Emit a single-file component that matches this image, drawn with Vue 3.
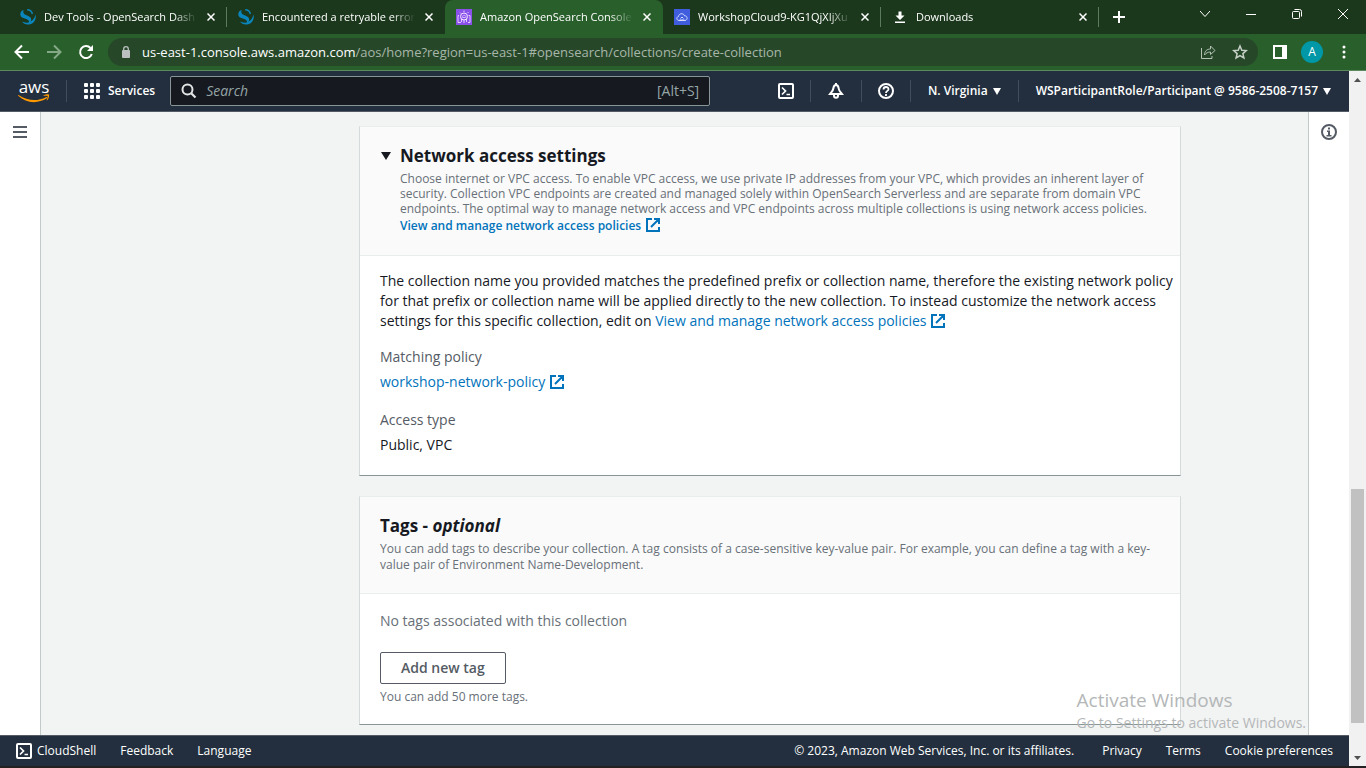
<script setup>
import { ref } from 'vue'

const tabs = [
  { title: 'Dev Tools - OpenSearch Dash', icon: 'opensearch' },
  { title: 'Encountered a retryable error', icon: 'opensearch', joined: true },
  { title: 'Amazon OpenSearch Console', icon: 'service', active: true },
  { title: 'WorkshopCloud9-KG1QjXIjXu', icon: 'cloud9' },
  { title: 'Downloads', icon: 'download' }
]
const query = ref('')
const open = ref(true)
const externalPath = 'M6 1H1v12h12V9M8 1h5v5M13 1L5 9'
</script>

<template>
  <div class="window">
    <header class="tabstrip">
      <div v-for="tab in tabs" :key="tab.title" class="tab" :class="{ active: tab.active, joined: tab.joined }">
        <svg v-if="tab.icon === 'opensearch'" class="favicon" viewBox="0 0 16 16" aria-hidden="true">
          <path d="M.300 5.500C.300 3 1.600 1.500 3.600 1 2.700 4 4 5.200 6.600 6.200c3.200 1.200 4.900 2.500 4.600 5-.2 1.300-1 2.100-2.200 2.500.4-2-.8-3.200-3.500-4C2.200 8.800.3 7.900.3 5.500z" fill="#0b86bd" />
          <path d="M15.600 5.500c1 4.800-1.900 9.500-6.800 10-3 .3-5.400-.9-6.800-3 2.300 1.300 5.400 1.700 8.200.3 3.200-1.700 4.400-4.200 5.400-7.300z" fill="#0b86bd" />
          <path d="M7.200.8c2.700.1 4.600 1.600 5.200 4.200" fill="none" stroke="#0b86bd" stroke-width="1.500" />
        </svg>
        <svg v-else-if="tab.icon === 'service'" class="favicon" viewBox="0 0 16 16" aria-hidden="true">
          <rect width="16" height="16" fill="#8950ea" />
          <path d="M3 6.500H2v7h3M5.500 13V9.500M8 14v-3M10.500 13V9.500M12.500 6.500h1.500v7h-2M5 4.500L4 3.500M11.500 4l1-1M8 3V1.500" fill="none" stroke="#e2cdff" />
          <circle cx="8" cy="7.500" r="3.500" fill="none" stroke="#f1e6ff" />
          <path d="M6.500 8.500c-.6-1 .2-1.700.8-1.700.4-1 1.800-.8 2 .1 1 .1 1 1.600 0 1.600z" fill="none" stroke="#e2cdff" stroke-width=".8" />
        </svg>
        <svg v-else-if="tab.icon === 'cloud9'" class="favicon" viewBox="0 0 16 16" aria-hidden="true">
          <rect width="16" height="16" fill="#3f5ddd" />
          <path d="M5 11.500c-2.500 0-3-3.500-.5-4 .3-3.300 5-3.800 6-.7 3.200-.2 3.500 4.500.5 4.700zM6.500 9.500L8 8l1.500 1.500M5.500 11h5" fill="none" stroke="#d5ddff" />
        </svg>
        <svg v-else class="favicon" viewBox="0 0 16 16" aria-hidden="true">
          <path d="M6.500 2.500h3v4h3L8 11 3.500 6.500h3zM3 12.500h10v1.500H3z" fill="#fff" />
        </svg>
        <a class="tab-title" href="#">{{ tab.title }}</a>
        <button class="tab-close" type="button" aria-label="Close tab">
          <svg width="8" height="8" viewBox="0 0 8 8"><path d="M.5.5l7 7M7.500.5l-7 7" stroke="#fff" stroke-width="1.500" /></svg>
        </button>
      </div>
      <button class="new-tab" type="button" aria-label="New tab">
        <svg width="12" height="12" viewBox="0 0 12 12"><path d="M6 0v12M0 6h12" stroke="#fff" stroke-width="2" /></svg>
      </button>
      <div class="window-controls">
        <button type="button" aria-label="Search tabs">
          <svg width="10" height="10" viewBox="0 0 10 10"><path d="M0 2l5 5.500L10 2" fill="none" stroke="#fff" /></svg>
        </button>
        <button type="button" aria-label="Minimize">
          <svg width="10" height="10" viewBox="0 0 10 10"><path d="M0 5.500h10" stroke="#fff" /></svg>
        </button>
        <button type="button" aria-label="Restore">
          <svg width="10" height="10" viewBox="0 0 10 10"><rect x=".5" y="2.500" width="7" height="7" rx="1" fill="none" stroke="#fff" /><path d="M2.500.5h5a2 2 0 0 1 2 2v5" fill="none" stroke="#fff" /></svg>
        </button>
        <button type="button" aria-label="Close">
          <svg width="10" height="10" viewBox="0 0 10 10"><path d="M0 0l10 10M10 0L0 10" stroke="#fff" /></svg>
        </button>
      </div>
    </header>

    <div class="toolbar">
      <button type="button" aria-label="Back">
        <svg width="16" height="16" viewBox="0 0 16 16"><path d="M15 8H2M8 1.500L1.500 8 8 14.500" fill="none" stroke="#fff" stroke-width="2" /></svg>
      </button>
      <button type="button" aria-label="Forward">
        <svg width="16" height="16" viewBox="0 0 16 16"><path d="M1 8h13M8 1.500L14.500 8 8 14.500" fill="none" stroke="#85a886" stroke-width="2" /></svg>
      </button>
      <button type="button" aria-label="Reload">
        <svg width="16" height="16" viewBox="0 0 16 16"><path d="M13.800 10A6 6 0 1 1 12.500 4" fill="none" stroke="#fff" stroke-width="2" /><path d="M15 1v6H9z" fill="#fff" /></svg>
      </button>
      <div class="omnibox">
        <svg width="10" height="13" viewBox="0 0 10 13" aria-hidden="true"><rect x="1" y="4" width="8" height="8" rx="1" fill="#bcc0c1" /><path d="M2.700 4.500V3a2.300 2.300 0 0 1 4.600 0v1.500" fill="none" stroke="#bcc0c1" stroke-width="1.300" /></svg>
        <div class="url"><b>us-east-1.console.aws.amazon.com</b>/aos/home?region=us-east-1#opensearch/collections/create-collection</div>
        <button type="button" aria-label="Share">
          <svg width="16" height="16" viewBox="0 0 16 16"><path d="M1.500 4v10.500H12V12M4.500 11c.2-4 2.500-6 6-6V2l4.500 4.500-4.500 4V8C8 8 6 9 4.500 11z" fill="none" stroke="#b4c2b5" /></svg>
        </button>
        <button type="button" aria-label="Bookmark">
          <svg width="16" height="16" viewBox="0 0 16 16"><path d="M8 2l1.800 4.200 4.500.4-3.400 3 1 4.400L8 11.700 4.100 14l1-4.400-3.400-3 4.500-.4z" fill="none" stroke="#c7d0c8" stroke-width="1.500" /></svg>
        </button>
      </div>
      <button class="side-panel" type="button" aria-label="Side panel">
        <svg width="14" height="14" viewBox="0 0 14 14"><path d="M0 0h14v14H0zM2 2v10h7V2z" fill="#fff" fill-rule="evenodd" /></svg>
      </button>
      <button class="profile" type="button">A</button>
      <button class="menu" type="button" aria-label="Menu">
        <svg width="4" height="14" viewBox="0 0 4 14"><circle cx="2" cy="2" r="1.500" fill="#fff" /><circle cx="2" cy="7" r="1.500" fill="#fff" /><circle cx="2" cy="12" r="1.500" fill="#fff" /></svg>
      </button>
    </div>

    <div class="viewport">
      <div class="page">
        <nav class="console-nav">
          <a class="logo" href="#" aria-label="AWS">
            <span>aws</span>
            <svg width="32" height="9" viewBox="0 0 32 9"><path d="M.5 1c9 6 19 6.500 27.500 2.200.9-.4 1.600.5.8 1.100C20 10 8 9.500.2 1.800-.2 1.200.1.8.5 1z" fill="#f90" /><path d="M25.500 1.500c2-1.300 5-1.400 5.500-.8.400.6-.1 4-1.900 5.600-.3.200-.6.100-.4-.2.400-1.100 1.300-3.400.9-4-.5-.6-2.700-.3-3.900-.2-.4 0-.4-.2-.2-.4z" fill="#f90" /></svg>
          </a>
          <button class="services" type="button">
            <svg width="17" height="17" viewBox="0 0 17 17" fill="#fff"><g v-for="y in 3" :key="y"><rect v-for="x in 3" :key="x" :x="(x - 1) * 6" :y="(y - 1) * 6" width="4" height="4" rx="1" /></g></svg>
            Services
          </button>
          <label class="search">
            <svg width="16" height="16" viewBox="0 0 16 16" aria-hidden="true"><circle cx="6.500" cy="6.500" r="5" fill="none" stroke="#e3e5e5" stroke-width="2" /><path d="M10 10l4.500 4.500" stroke="#e3e5e5" stroke-width="2.200" /></svg>
            <input v-model="query" type="text" placeholder="Search" aria-label="Search">
            <span>[Alt+S]</span>
          </label>
          <div class="nav-items">
            <button type="button" aria-label="CloudShell">
              <svg width="16" height="16" viewBox="0 0 16 16" fill="none" stroke="#fff" stroke-width="2"><rect x="1" y="1" width="14" height="14" rx="1" /><path d="M4 4.500L7.500 8 4 11.500M8.500 11.500H12" stroke-width="1.700" /></svg>
            </button>
            <button class="bell" type="button" aria-label="Notifications">
              <svg width="16" height="16" viewBox="0 0 16 16" fill="none" stroke="#fff" stroke-width="2"><path d="M8 2C6 2 5.500 4 5.300 5.500 5 8 3.500 9 2 11h12c-1.500-2-3-3-3.300-5.500C10.500 4 10 2 8 2zM8 0v2" /><path d="M6 11.500v1.300a2 2 0 0 0 4 0v-1.300" /></svg>
            </button>
            <button type="button" aria-label="Help">
              <svg width="16" height="16" viewBox="0 0 16 16" fill="none" stroke="#fff"><circle cx="8" cy="8" r="7" stroke-width="2" /><path d="M5.500 6.500c0-3.400 5-3.200 5-.3C10.500 8 8 7.800 8 10M8 11v2" stroke-width="1.800" /></svg>
            </button>
            <button type="button">N. Virginia <i class="caret"></i></button>
            <button type="button">WSParticipantRole/Participant @ 9586-2508-7157 <i class="caret"></i></button>
          </div>
        </nav>

        <div class="body">
          <aside class="rail left">
            <button type="button" aria-label="Open navigation">
              <svg width="14" height="12" viewBox="0 0 14 12"><path d="M0 1h14M0 6h14M0 11h14" stroke="#545b64" stroke-width="2" /></svg>
            </button>
          </aside>
          <main>
            <section class="card">
              <header class="card-head collapsible">
                <h2>
                  <button type="button" :aria-expanded="open" @click="open = !open"><i class="disclosure"></i>Network access settings</button>
                </h2>
                <p class="tight">Choose internet or VPC access. To enable VPC access, we use private IP addresses from your VPC, which provides an inherent layer of<br>security. Collection VPC endpoints are created and managed solely within OpenSearch Serverless and are separate from domain VPC<br>endpoints. The optimal way to manage network access and VPC endpoints across multiple collections is using network access policies.</p>
                <a class="strong" href="#">View and manage network access policies<svg class="external" viewBox="0 0 14 14"><path :d="externalPath" /></svg></a>
              </header>
              <div v-if="open" class="card-body">
                <p>The collection name you provided matches the predefined prefix or collection name, therefore the existing network policy<br>for that prefix or collection name will be applied directly to the new collection. To instead customize the network access<br>settings for this specific collection, edit on <a href="#">View and manage network access policies<svg class="external" viewBox="0 0 14 14"><path :d="externalPath" /></svg></a></p>
                <dl>
                  <div>
                    <dt>Matching policy</dt>
                    <dd><a href="#">workshop-network-policy<svg class="external" viewBox="0 0 14 14"><path :d="externalPath" /></svg></a></dd>
                  </div>
                  <div>
                    <dt>Access type</dt>
                    <dd>Public, VPC</dd>
                  </div>
                </dl>
              </div>
            </section>

            <section class="card">
              <header class="card-head">
                <h2>Tags - <em>optional</em></h2>
                <p>You can add tags to describe your collection. A tag consists of a case-sensitive key-value pair. For example, you can define a tag with a key-<br>value pair of Environment Name-Development.</p>
              </header>
              <div class="card-body">
                <p class="muted">No tags associated with this collection</p>
                <button class="add" type="button">Add new tag</button>
                <p class="hint">You can add 50 more tags.</p>
              </div>
            </section>
          </main>
          <aside class="rail right">
            <button type="button" aria-label="Info">
              <svg width="16" height="16" viewBox="0 0 16 16"><circle cx="8" cy="8" r="7" fill="none" stroke="#545b64" stroke-width="2" /><path d="M7 3.500h2v2H7zM6 6.500h3V11h1.500v1.500h-5V11H7V8H6z" fill="#545b64" /></svg>
            </button>
          </aside>
        </div>

        <footer class="console-foot">
          <button type="button">
            <svg width="16" height="16" viewBox="0 0 16 16" fill="none" stroke="#fff" stroke-width="2"><rect x="1" y="1" width="14" height="14" rx="1" /><path d="M4 4.500L7.500 8 4 11.500M8.500 11.500H12" stroke-width="1.700" /></svg>CloudShell
          </button>
          <a href="#">Feedback</a>
          <a href="#">Language</a>
          <span class="copyright">© 2023, Amazon Web Services, Inc. or its affiliates.</span>
          <a href="#">Privacy</a>
          <a href="#">Terms</a>
          <a href="#">Cookie preferences</a>
        </footer>
      </div>
      <div class="scrollbar" aria-hidden="true">
        <svg viewBox="0 0 17 17"><path d="M5 11l3.500-4 3.500 4z" fill="#505050" /></svg>
        <div class="track"><div class="thumb"></div></div>
        <svg viewBox="0 0 17 17"><path d="M5 7l3.500 4L12 7z" fill="#505050" /></svg>
      </div>
    </div>

    <div class="watermark">
      <div class="big">Activate Windows</div>
      <div>Go to Settings to activate Windows.</div>
    </div>
  </div>
</template>

<style>
html, body { margin: 0; height: 100%; overflow: hidden; }
</style>

<style scoped>
.window {
  position: relative;
  display: flex;
  flex-direction: column;
  height: 100vh;
  font-family: "Open Sans", "Noto Sans", sans-serif;
  font-size: 14px;
  line-height: 20px;
  color: #16191f;
  background: #242122;
}
button {
  display: inline-flex;
  align-items: center;
  justify-content: center;
  margin: 0;
  padding: 0;
  border: 0;
  background: none;
  color: inherit;
  font: inherit;
}
svg { flex: none; display: block; }
a { color: #0073bb; text-decoration: none; }
p, h2, dl, dd { margin: 0; }

.tabstrip { display: flex; height: 34px; padding-left: 9px; background: #1b381c; }
.tab {
  position: relative;
  display: flex;
  align-items: center;
  box-sizing: border-box;
  flex: 0 1 218px;
  min-width: 0;
  padding: 0 9px 0 11px;
  color: #fff;
}
.tab::after {
  content: "";
  position: absolute;
  right: 0;
  top: 7px;
  width: 1px;
  height: 20px;
  background: #5c7a5d;
}
.tab.active { background: #285f2b; border-radius: 8px 8px 0 0; }
.tab.active::after, .tab.joined::after { display: none; }
.favicon { width: 16px; height: 16px; }
.tab-title {
  flex: 1;
  min-width: 0;
  margin-left: 8px;
  overflow: hidden;
  white-space: nowrap;
  color: #fff;
  font-size: 11px;
  -webkit-mask-image: linear-gradient(to right, #000 85%, transparent);
  mask-image: linear-gradient(to right, #000 85%, transparent);
}
.tab-close { width: 14px; height: 14px; margin-left: 7px; }
.new-tab { width: 40px; }
.window-controls { display: flex; height: 28px; margin-left: auto; }
.window-controls button { width: 46px; }

.toolbar {
  display: flex;
  align-items: center;
  height: 36px;
  padding: 0 6px;
  background: #285f2b;
  border-bottom: 1px solid #5c8a5e;
}
.toolbar > button { width: 32px; height: 32px; }
.omnibox {
  flex: 1;
  display: flex;
  align-items: center;
  height: 28px;
  margin-left: 6px;
  padding: 0 10px 0 13px;
  border-radius: 14px;
  background: #264829;
}
.url { flex: 1; margin-left: 11px; white-space: nowrap; font-size: 13px; color: #a8b6a9; }
.url b { font-weight: 400; color: #fff; }
.omnibox button { width: 16px; margin-left: 16px; }
.toolbar .side-panel { margin-left: 6px; }
.toolbar .profile {
  width: 22px;
  height: 22px;
  margin: 0 5px;
  border-radius: 50%;
  background: #0097a7;
  color: #fff;
  font-size: 12px;
}
.toolbar .menu { width: 32px; }

.viewport { flex: 1; display: flex; min-height: 0; margin-bottom: 2px; }
.page { flex: 1; display: flex; flex-direction: column; min-width: 0; background: #f2f3f3; }

.console-nav {
  display: flex;
  align-items: center;
  height: 40px;
  padding: 0 18px;
  border-bottom: 1px solid #545b64;
  background: #232f3e;
  color: #fff;
  font-size: 12px;
  font-weight: 600;
}
.logo { width: 32px; color: #fff; text-align: center; font-size: 17px; line-height: 15px; font-weight: 500; }
.logo span { display: block; }
.services { gap: 7px; height: 22px; margin-left: 16px; padding: 0 15px 0 17px; border-left: 1px solid #414d5c; }
.search {
  display: flex;
  align-items: center;
  box-sizing: border-box;
  width: 540px;
  height: 30px;
  padding: 0 10px;
  border: 1px solid #879596;
  border-radius: 2px;
  background: #161920;
  color: #95a5a6;
  font-size: 14px;
  font-weight: 400;
}
.search input {
  flex: 1;
  min-width: 0;
  margin-left: 9px;
  padding: 0;
  border: 0;
  outline: 0;
  background: none;
  color: #fff;
  font: inherit;
}
.search input::placeholder { color: #95a5a6; opacity: 1; font-style: italic; }
.nav-items { display: flex; align-items: center; margin-left: auto; white-space: nowrap; }
.nav-items button { height: 22px; padding: 0 17px; border-left: 1px solid #414d5c; }
.nav-items button:first-child { border-left: 0; }
.nav-items button:nth-child(-n+3) { padding: 0 16px; }
.nav-items button.bell { padding: 0 17px; }
.nav-items button:last-child { padding-right: 0; }
.caret { margin-left: 5px; border: 4px solid transparent; border-top: 7px solid #fff; border-bottom: 0; }

.body { flex: 1; display: flex; min-height: 0; overflow: hidden; }
.rail { flex: 0 0 40px; padding-top: 12px; background: #fff; }
.rail button { display: flex; width: 100%; height: 16px; }
.rail.left { border-right: 1px solid #c3caca; }
.rail.right { border-left: 1px solid #c3caca; }
main { flex: 1; min-width: 0; padding: 14px 127px 0 318px; }
.card {
  margin-bottom: 20px;
  border: 1px solid #d5dbdb;
  border-top-color: #eaeded;
  border-bottom-color: #879596;
  background: #fff;
  white-space: nowrap;
}
.card-head {
  padding: 18px 20px 20px;
  border-bottom: 1px solid #eaeded;
  background: #fafafa;
}
.card-head.collapsible { padding-left: 40px; }
.card-head h2 { font-size: 17px; line-height: 22px; font-weight: 700; }
.card-head.collapsible h2 { margin-left: -20px; }
.card-head h2 button { display: flex; }
.disclosure { margin: 0 9px 0 1px; border: 5px solid transparent; border-top: 8px solid #16191f; border-bottom: 0; }
.card-head p { margin-top: 4px; font-size: 12px; line-height: 16px; color: #687078; }
.card-head p.tight { line-height: 15px; }
.strong { display: block; font-size: 12px; line-height: 19px; font-weight: 600; }
.external {
  display: inline-block;
  width: 14px;
  height: 14px;
  margin-left: 5px;
  vertical-align: -2px;
  fill: none;
  stroke: #0073bb;
  stroke-width: 2;
}
.card-body { padding: 15px 20px 20px; }
dl > div { margin-top: 16px; }
dl > div + div { margin-top: 18px; }
dt { color: #545b64; }
dd { margin-top: 5px; }
.muted { margin-top: 1px; line-height: 22px; color: #687078; }
.add {
  box-sizing: border-box;
  height: 32px;
  margin-top: 20px;
  padding: 0 20px;
  border: 1px solid #545b64;
  border-radius: 2px;
  background: #fff;
  color: #545b64;
  font-weight: 600;
}
.hint { margin-top: 5px; font-size: 12px; line-height: 15px; color: #687078; }

.console-foot {
  display: flex;
  align-items: center;
  gap: 24px;
  height: 30px;
  padding: 0 16px;
  border-top: 1px solid #545b64;
  background: #232f3e;
  color: #fff;
  font-size: 12px;
  font-weight: 500;
  white-space: nowrap;
}
.console-foot button { gap: 5px; }
.console-foot a { color: #fff; }
.copyright { margin-left: auto; margin-right: 4px; }

.scrollbar { display: flex; flex-direction: column; width: 17px; background: #f1f1f1; }
.track { flex: 1; display: grid; grid-template-rows: 401fr 234fr 26fr; }
.thumb { grid-row: 2; margin: 0 2px; background: #c1c1c1; }

.watermark {
  position: absolute;
  right: 60px;
  bottom: 35px;
  color: #b4b7b8;
  pointer-events: none;
  white-space: nowrap;
}
.watermark .big { font-size: 19px; line-height: 25px; }
</style>
